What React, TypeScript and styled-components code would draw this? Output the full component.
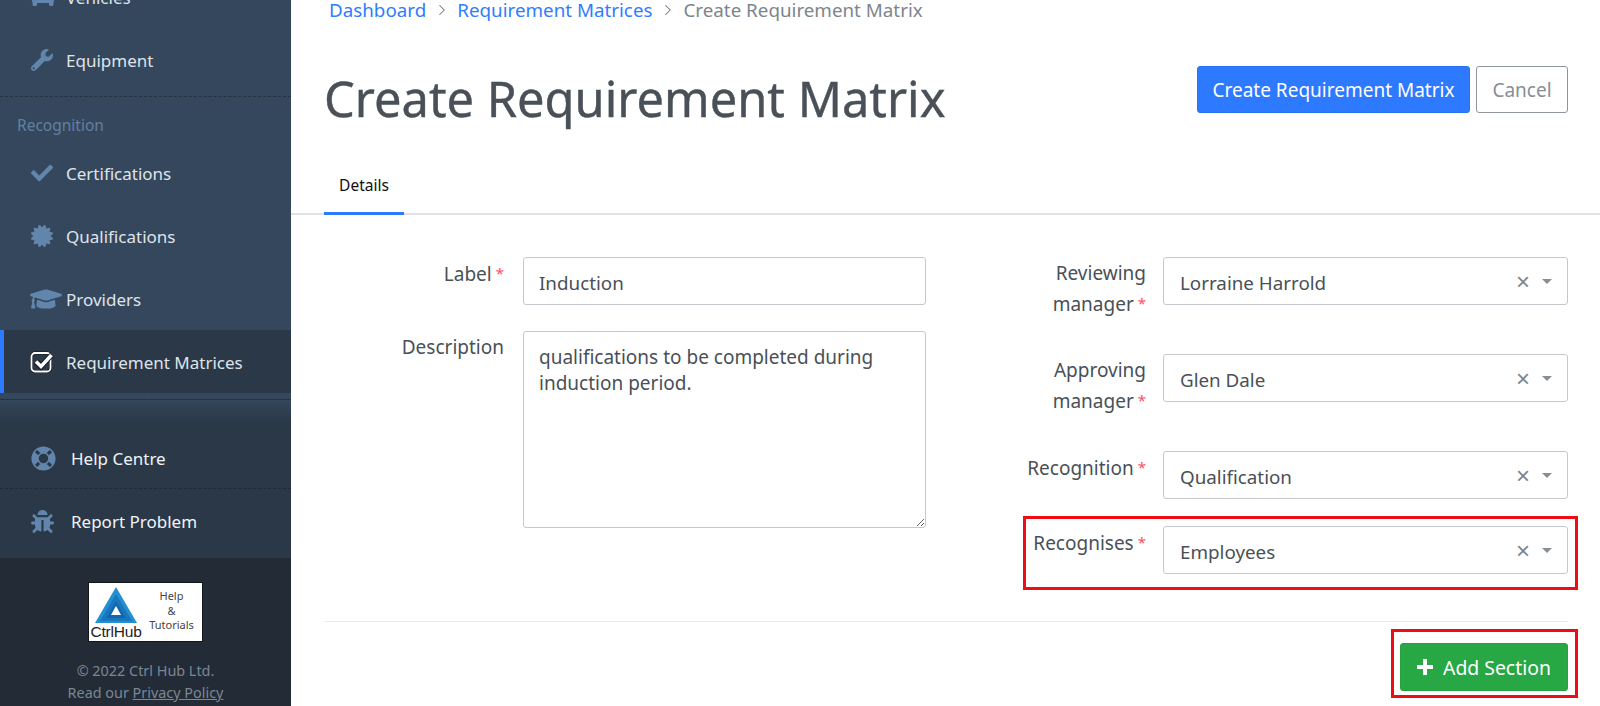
import React from 'react'
import styled, { createGlobalStyle } from 'styled-components'
import { ChevronRight } from 'lucide-react'
import {
  FaBug,
  FaCar,
  FaCertificate,
  FaCheck,
  FaGraduationCap,
  FaLifeRing,
  FaWrench,
} from 'react-icons/fa'

const GlobalStyle = createGlobalStyle`
  html, body {
    margin: 0;
    height: 100%;
    overflow: hidden;
    background: #fff;
  }
  body {
    font-family: "Noto Sans", "Open Sans", sans-serif;
    font-size: 19px;
    color: #495057;
  }
  * {
    box-sizing: border-box;
  }
`

const Page = styled.div`
  display: flex;
  height: 706px;
  overflow: hidden;
`

const Sidebar = styled.aside`
  display: flex;
  flex-direction: column;
  flex: 0 0 291px;
  height: 706px;
  overflow: hidden;
  background: #35475c;
`

const NavList = styled.nav`
  margin-top: -35px;
`

const NavItem = styled.a<{ $active?: boolean }>`
  display: flex;
  align-items: center;
  height: 63px;
  padding-top: 1px;
  padding-left: ${props => (props.$active ? '26px' : '31px')};
  border-left: ${props => (props.$active ? '4px solid #2d79ff' : 'none')};
  background: ${props => (props.$active ? '#2b3848' : 'transparent')};
  color: #dfe4ea;
  font-size: 17px;
`

const NavIcon = styled.span<{ $active?: boolean }>`
  display: flex;
  align-items: center;
  flex: 0 0 ${props => (props.$active ? '36px' : '35px')};
  color: ${props => (props.$active ? '#fff' : '#6285ab')};
  font-size: 22px;

  svg {
    flex-shrink: 0;
  }
`

const WideIcon = styled(NavIcon)`
  margin-left: -1px;
  flex-basis: 36px;
`

const SectionGroup = styled.div`
  border-top: 1px dashed #263240;
  margin-top: 5px;
`

const SectionTitle = styled.div`
  height: 44px;
  padding: 17px 0 0 17px;
  color: #6280a0;
  font-size: 15.5px;
  line-height: 22px;
`

const SupportList = styled.div`
  margin-top: 6px;
  padding-top: 28px;
  border-top: 1px dashed #263240;
  background: linear-gradient(#35475c 0, #2a3848 22px);
`

const SupportItem = styled.a<{ $last?: boolean }>`
  display: flex;
  align-items: center;
  height: ${props => (props.$last ? '69px' : '61px')};
  padding-left: 31px;
  padding-bottom: ${props => (props.$last ? '4px' : '0')};
  border-bottom: ${props => (props.$last ? 'none' : '1px dashed #202b37')};
  color: #f0f4f8;
  font-size: 17px;
`

const SupportIcon = styled.span`
  display: flex;
  flex: 0 0 40px;
  color: #6285ab;
`

const SidebarFooter = styled.footer`
  display: flex;
  flex-direction: column;
  align-items: center;
  flex: 1;
  padding-top: 24px;
  background: #222b36;
  color: #7c8794;
  font-size: 14.4px;
  line-height: 22px;
  text-align: center;
`

const LogoCard = styled.a`
  display: flex;
  width: 115px;
  height: 60px;
  margin-bottom: 18px;
  padding: 4px 4px 0 1px;
  border: 1px solid #11161c;
  background: #fff;
  color: #444;
`

const LogoMark = styled.div`
  display: flex;
  flex-direction: column;
  align-items: center;
  flex: 0 0 52px;
`

const LogoName = styled.span`
  color: #222;
  font-family: "Liberation Sans", sans-serif;
  font-size: 15.5px;
  line-height: 17px;
  letter-spacing: -0.2px;
`

const LogoCaption = styled.div`
  flex: 1;
  padding: 2px 0 0 3px;
  font-family: "Noto Sans", sans-serif;
  font-size: 11px;
  line-height: 14.5px;
  text-align: center;
`

const PolicyLink = styled.a`
  color: inherit;
  text-decoration: underline;
`

const Main = styled.main`
  flex: 1;
  min-width: 0;
`

const Breadcrumb = styled.ol`
  display: flex;
  align-items: center;
  height: 20px;
  margin: 0;
  padding: 0 0 0 38px;
  list-style: none;
  font-size: 18.8px;
  line-height: 20px;
`

const CrumbLink = styled.a`
  color: #2f7dff;
`

const CrumbCurrent = styled.li`
  color: #7d858c;
`

const CrumbDivider = styled.li`
  display: flex;
  justify-content: center;
  width: 31px;
  color: #6c757d;
`

const Header = styled.header`
  display: flex;
  align-items: flex-start;
  justify-content: space-between;
  padding: 46px 32px 0 33px;
`

const Title = styled.h1`
  margin: -1px 0 0;
  color: #495057;
  font-size: 48.8px;
  font-weight: 400;
  line-height: 66px;
  -webkit-text-stroke: 0.4px #495057;
`

const HeaderActions = styled.div`
  display: flex;
  gap: 6px;
`

const Button = styled.button`
  height: 47px;
  border-radius: 3px;
  font-family: inherit;
  font-size: 19px;
`

const PrimaryButton = styled(Button)`
  width: 273px;
  padding: 0;
  border: 1px solid #2673f5;
  background: #2d79ff;
  color: #fff;
`

const CancelButton = styled(Button)`
  width: 92px;
  padding: 0;
  border: 1px solid #8f969c;
  background: #fff;
  color: #878e95;
`

const Tabs = styled.div`
  display: flex;
  margin-top: 33px;
  padding-left: 33px;
  border-bottom: 2px solid #dee2e6;
`

const Tab = styled.a`
  width: 80px;
  height: 51px;
  margin-bottom: -2px;
  padding-top: 10px;
  border-bottom: 3px solid #2d79ff;
  color: #111;
  font-size: 15.5px;
  line-height: 22px;
  text-align: center;
`

const FormGrid = styled.form`
  display: grid;
  grid-template-columns: 602px 602px;
  column-gap: 40px;
  padding: 42px 32px 0 33px;
`

const Column = styled.div`
  display: flex;
  flex-direction: column;
`

const FieldRow = styled.div<{ $height: number; $gap?: number }>`
  position: relative;
  display: flex;
  align-items: flex-start;
  gap: ${props => props.$gap ?? 19}px;
  min-height: ${props => props.$height}px;
`

const FieldLabel = styled.label`
  flex: 0 0 180px;
  padding-top: 1px;
  color: #495057;
  font-size: 19px;
  line-height: 30px;
  text-align: right;
`

const Required = styled.span`
  margin-left: 4px;
  color: #ff4d63;
  font-size: 15px;
  vertical-align: 2px;
`

const TextInput = styled.input`
  flex: 1;
  min-width: 0;
  height: 48px;
  padding: 4px 15px 0;
  border: 1px solid #c4c8cc;
  border-radius: 3px;
  outline: none;
  color: #495057;
  font-family: inherit;
  font-size: 18.8px;
`

const TextArea = styled.textarea`
  flex: 1;
  min-width: 0;
  height: 197px;
  padding: 12px 15px 0;
  border: 1px solid #c4c8cc;
  border-radius: 3px;
  outline: none;
  color: #495057;
  font-family: inherit;
  font-size: 19px;
  line-height: 26px;
`

const SelectBox = styled.div`
  display: flex;
  align-items: center;
  flex: 1;
  min-width: 0;
  height: 48px;
  padding: 0 15px 0 16px;
  border: 1px solid #c4c8cc;
  border-radius: 3px;
  color: #495057;
  font-size: 18.8px;
`

const SelectValue = styled.span`
  flex: 1;
  padding-top: 3px;
`

const ClearMark = styled.span`
  margin-right: 12px;
  padding-top: 1px;
  color: #7d858c;
  font-family: "Liberation Sans", sans-serif;
  font-size: 24px;
  line-height: 20px;
`

const Caret = styled.span`
  width: 0;
  height: 0;
  border-top: 5px solid #868e96;
  border-right: 5px solid transparent;
  border-left: 5px solid transparent;
`

const Annotation = styled.div<{ $top: number; $right: number; $bottom: number; $left: number }>`
  position: absolute;
  top: ${props => props.$top}px;
  right: ${props => props.$right}px;
  bottom: ${props => props.$bottom}px;
  left: ${props => props.$left}px;
  border: 3.5px solid #ee0d14;
  pointer-events: none;
`

const FormFooter = styled.div`
  position: relative;
  display: flex;
  justify-content: flex-end;
  margin: 0 32px 0 33px;
  padding-top: 21px;
  border-top: 1px solid #e9ecef;
`

const AddButton = styled(Button)`
  display: flex;
  align-items: center;
  gap: 9px;
  width: 168px;
  height: 48px;
  padding: 0 0 0 15px;
  border: 1px solid #26a041;
  background: #28a745;
  color: #fff;
  font-size: 19.4px;
`

const navItems = [
  { label: 'Certifications', icon: <FaCheck size={22} /> },
  { label: 'Qualifications', icon: <FaCertificate size={22} /> },
]

const managerFields = [
  { first: 'Reviewing', second: 'manager', value: 'Lorraine Harrold' },
  { first: 'Approving', second: 'manager', value: 'Glen Dale' },
]

const Select = ({ value }: { value: string }) => (
  <SelectBox>
    <SelectValue>{value}</SelectValue>
    <ClearMark>×</ClearMark>
    <Caret />
  </SelectBox>
)

const LogoTriangle = () => (
  <svg width="42" height="36" viewBox="0 0 42 36">
    <polygon points="21,0 42,36 0,36" fill="#2390d3" />
    <polygon points="21,7 37,34 5,34" fill="#1b77bd" />
    <polygon points="21,14 31,31 11,31" fill="#1268b0" />
    <polygon points="21,19 26,28 16,28" fill="#fff" />
  </svg>
)

const CheckSquareIcon = () => (
  <svg width="24" height="22" viewBox="0 0 24 22" fill="none">
    <rect x="1.5" y="2" width="19" height="18.5" rx="3.5" stroke="#10161d" strokeWidth="3" />
    <rect x="1.5" y="2" width="19" height="18.5" rx="3.5" stroke="#fff" strokeWidth="1.8" />
    <path d="M6 10.5l5 5L21.5 4" stroke="#10161d" strokeWidth="5.5" />
    <path d="M6 10.5l5 5L21.5 4" stroke="#fff" strokeWidth="3.6" />
  </svg>
)

const PlusIcon = () => (
  <svg width="18" height="18" viewBox="0 0 18 18" fill="currentColor">
    <path d="M7 1h4v6h6v4h-6v6H7v-6H1V7h6z" />
  </svg>
)

export default function App() {
  return (
    <Page>
      <GlobalStyle />
      <Sidebar>
        <NavList>
          <NavItem>
            <NavIcon><FaCar size={24} /></NavIcon>
            Vehicles
          </NavItem>
          <NavItem>
            <NavIcon><FaWrench size={22} /></NavIcon>
            Equipment
          </NavItem>
          <SectionGroup>
            <SectionTitle>Recognition</SectionTitle>
            {navItems.map(item => (
              <NavItem key={item.label}>
                <NavIcon>{item.icon}</NavIcon>
                {item.label}
              </NavItem>
            ))}
            <NavItem>
              <WideIcon><FaGraduationCap size={32} /></WideIcon>
              Providers
            </NavItem>
            <NavItem $active>
              <NavIcon $active><CheckSquareIcon /></NavIcon>
              Requirement Matrices
            </NavItem>
          </SectionGroup>
        </NavList>
        <SupportList>
          <SupportItem>
            <SupportIcon><FaLifeRing size={25} /></SupportIcon>
            Help Centre
          </SupportItem>
          <SupportItem $last>
            <SupportIcon><FaBug size={23} /></SupportIcon>
            Report Problem
          </SupportItem>
        </SupportList>
        <SidebarFooter>
          <LogoCard>
            <LogoMark>
              <LogoTriangle />
              <LogoName>CtrlHub</LogoName>
            </LogoMark>
            <LogoCaption>Help<br />&amp;<br />Tutorials</LogoCaption>
          </LogoCard>
          <span>© 2022 Ctrl Hub Ltd.</span>
          <span>Read our <PolicyLink>Privacy Policy</PolicyLink></span>
        </SidebarFooter>
      </Sidebar>

      <Main>
        <Breadcrumb>
          <li><CrumbLink>Dashboard</CrumbLink></li>
          <CrumbDivider><ChevronRight size={18} strokeWidth={1.4} /></CrumbDivider>
          <li><CrumbLink>Requirement Matrices</CrumbLink></li>
          <CrumbDivider><ChevronRight size={18} strokeWidth={1.4} /></CrumbDivider>
          <CrumbCurrent>Create Requirement Matrix</CrumbCurrent>
        </Breadcrumb>

        <Header>
          <Title>Create Requirement Matrix</Title>
          <HeaderActions>
            <PrimaryButton type="button">Create Requirement Matrix</PrimaryButton>
            <CancelButton type="button">Cancel</CancelButton>
          </HeaderActions>
        </Header>

        <Tabs>
          <Tab>Details</Tab>
        </Tabs>

        <FormGrid>
          <Column>
            <FieldRow $height={74}>
              <FieldLabel>Label<Required>*</Required></FieldLabel>
              <TextInput readOnly defaultValue="Induction" />
            </FieldRow>
            <FieldRow $height={197}>
              <FieldLabel>Description</FieldLabel>
              <TextArea readOnly defaultValue="qualifications to be completed during induction period." />
            </FieldRow>
          </Column>
          <Column>
            {managerFields.map(field => (
              <FieldRow $height={97} $gap={17} key={field.first}>
                <FieldLabel>
                  {field.first}<br />{field.second}<Required>*</Required>
                </FieldLabel>
                <Select value={field.value} />
              </FieldRow>
            ))}
            <FieldRow $height={75} $gap={17}>
              <FieldLabel>Recognition<Required>*</Required></FieldLabel>
              <Select value="Qualification" />
            </FieldRow>
            <FieldRow $height={95} $gap={17}>
              <FieldLabel>Recognises<Required>*</Required></FieldLabel>
              <Select value="Employees" />
              <Annotation $top={-10} $right={-10} $bottom={31} $left={57} />
            </FieldRow>
          </Column>
        </FormGrid>

        <FormFooter>
          <AddButton type="button">
            <PlusIcon />
            Add Section
          </AddButton>
          <Annotation $top={7} $right={-10} $bottom={-7} $left={1067} />
        </FormFooter>
      </Main>
    </Page>
  )
}
